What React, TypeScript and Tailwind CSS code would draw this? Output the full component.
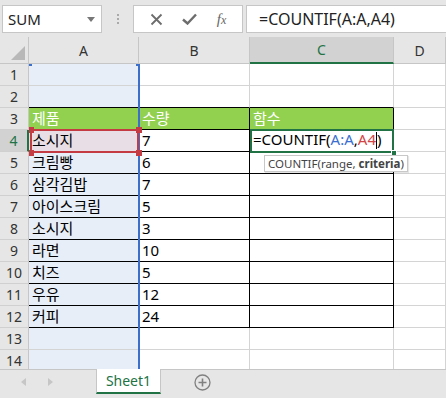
import React from "react";

const cols = [
  { key: "A", w: "w-[110px]" },
  { key: "B", w: "w-[111px]" },
  { key: "C", w: "w-[144px]" },
  { key: "D", w: "flex-1" },
];

const data: Array<[string, string]> = [
  ["소시지", "7"],
  ["크림빵", "6"],
  ["삼각김밥", "7"],
  ["아이스크림", "5"],
  ["소시지", "3"],
  ["라면", "10"],
  ["치즈", "5"],
  ["우유", "12"],
  ["커피", "24"],
];

const font = { fontFamily: '"Noto Sans", "Noto Sans CJK KR", sans-serif' };

function Cell({
  col,
  row,
}: {
  col: string;
  row: number;
}) {
  const inTable = row >= 3 && row <= 12 && col !== "D";
  const topOfTable = row === 2 && col !== "D";
  const isHead = row === 3 && col !== "D";
  const w = cols.find((c) => c.key === col)!.w;

  let bg = "bg-white";
  if (col === "A") bg = "bg-[#e8eef8]";
  if (col === "A" && row === 4) bg = "bg-[#e8dfe6]";
  if (isHead) bg = "bg-[#92d050]";

  const border =
    inTable
      ? "border-r border-b border-r-black border-b-black"
      : topOfTable
        ? "border-r border-b border-r-[#d4d4d4] border-b-black"
        : "border-r border-b border-[#d4d4d4]";

  let text: React.ReactNode = null;
  if (isHead) text = col === "A" ? "제품" : col === "B" ? "수량" : "함수";
  if (row >= 4 && row <= 12) {
    const d = data[row - 4];
    if (col === "A") text = d[0];
    if (col === "B") text = d[1];
  }
  if (col === "C" && row === 4) {
    text = (
      <span className="relative">
        =COUNTIF(<span className="text-[#3a6fd0]">A:A</span>,
        <span className="text-[#d24545]">A4</span>
        <span className="inline-block w-px h-[17px] bg-black align-middle -mt-[2px]" />)
      </span>
    );
  }

  return (
    <div
      className={`${w} shrink-0 h-full ${bg} ${border} flex items-center pl-[3px] text-[15px] leading-none whitespace-nowrap overflow-visible ${
        isHead ? "text-white" : "text-black"
      }`}
    >
      {text}
    </div>
  );
}

function XIcon() {
  return (
    <svg width="13" height="13" viewBox="0 0 13 13">
      <path d="M1.5 1.5 L11.5 11.5 M11.5 1.5 L1.5 11.5" stroke="#6d6d6d" strokeWidth="1.8" />
    </svg>
  );
}

function CheckIcon() {
  return (
    <svg width="15" height="12" viewBox="0 0 15 12">
      <path d="M1 6.5 L5.5 10.5 L14 1.5" stroke="#6d6d6d" strokeWidth="2.4" fill="none" />
    </svg>
  );
}

export default function App() {
  const rows = Array.from({ length: 14 }, (_, i) => i + 1);

  return (
    <div className="w-[446px] h-[398px] bg-[#e6e6e6] overflow-hidden select-none" style={font}>
      {/* formula bar */}
      <div className="h-[37px] flex items-start pt-[5px] pl-[2px]">
        <div className="w-[100px] h-[28px] bg-white border border-[#c6c6c6] flex items-center pl-[5px] pr-[6px] text-[15px] text-[#222]">
          <span className="flex-1">SUM</span>
          <svg width="8" height="5" viewBox="0 0 8 5">
            <path d="M0 0 H8 L4 5 Z" fill="#777" />
          </svg>
        </div>
        <div className="w-[31px] h-[28px] flex flex-col items-center justify-center gap-[2px]">
          <span className="w-[2px] h-[2px] bg-[#aaa]" />
          <span className="w-[2px] h-[2px] bg-[#aaa]" />
          <span className="w-[2px] h-[2px] bg-[#aaa]" />
        </div>
        <div className="w-[110px] h-[28px] bg-white border border-[#c6c6c6] flex items-center justify-around px-[6px]">
          <XIcon />
          <CheckIcon />
          <span
            className="text-[15px] italic text-[#666] leading-none"
            style={{ fontFamily: '"Liberation Serif", serif' }}
          >
            f<span className="text-[12px]">x</span>
          </span>
        </div>
        <div className="ml-[3px] flex-1 h-[28px] bg-white border border-[#c6c6c6] border-r-0 flex items-center pl-[12px] text-[16px] text-[#222]">
          =COUNTIF(A:A,A4)
        </div>
      </div>

      {/* grid */}
      <div className="relative h-[332px] overflow-hidden bg-white">
        {/* column header */}
        <div className="h-[27px] flex bg-[#e6e6e6] text-[14px] text-[#333]">
          <div className="w-[29px] shrink-0 h-full border-r border-b border-[#c6c6c6] flex items-end justify-end p-[3px]">
            <svg width="14" height="14" viewBox="0 0 14 14">
              <path d="M14 0 V14 H0 Z" fill="#b8b8b8" />
            </svg>
          </div>
          {cols.map((c) => (
            <div
              key={c.key}
              className={`${c.w} shrink-0 h-full flex items-center justify-center border-r border-[#c6c6c6] ${
                c.key === "C"
                  ? "bg-[#d2d2d2] border-b-2 border-b-[#217346] text-[#217346]"
                  : "border-b border-b-[#c6c6c6]"
              }`}
            >
              {c.key}
            </div>
          ))}
        </div>

        {rows.map((r) => (
          <div key={r} className="h-[22px] flex">
            <div
              className={`w-[29px] shrink-0 h-full flex items-center justify-center text-[14px] border-b border-[#d0d0d0] ${
                r === 4
                  ? "bg-[#d2d2d2] text-[#217346] border-r-2 border-r-[#217346]"
                  : "bg-[#e6e6e6] text-[#333] border-r border-r-[#c6c6c6]"
              }`}
            >
              {r}
            </div>
            {cols.map((c) => (
              <Cell key={c.key} col={c.key} row={r} />
            ))}
          </div>
        ))}

        {/* blue range A:A */}
        <div className="absolute left-[138px] top-[27px] w-[2px] h-[320px] bg-[#3c6fcb]" />
        <div className="absolute left-[29px] top-[27px] w-[3px] h-[2px] bg-[#3c6fcb]" />
        <div className="absolute left-[136px] top-[27px] w-[4px] h-[2px] bg-[#3c6fcb]" />

        {/* red range A4 */}
        <div className="absolute left-[30px] top-[92px] w-[109px] h-[24px] border-2 border-[#c43b44]" />
        <div className="absolute left-[29px] top-[90px] w-[5px] h-[6px] bg-[#c43b44]" />
        <div className="absolute left-[136px] top-[90px] w-[6px] h-[6px] bg-[#c43b44]" />
        <div className="absolute left-[29px] top-[113px] w-[5px] h-[6px] bg-[#c43b44]" />
        <div className="absolute left-[136px] top-[113px] w-[6px] h-[6px] bg-[#c43b44]" />

        {/* active cell C4 */}
        <div className="absolute left-[250px] top-[92px] w-[144px] h-[24px] border-2 border-[#217346]" />
        <div className="absolute left-[391px] top-[113px] w-[6px] h-[6px] bg-[#217346] border border-white" />

        {/* tooltip */}
        <div className="absolute left-[264px] top-[118px] h-[17px] px-[3px] bg-white border border-[#c8c8c8] shadow-[1px_1px_1px_rgba(0,0,0,0.1)] flex items-center text-[11.5px] text-[#444] whitespace-nowrap">
          COUNTIF(range, <b className="font-bold ml-[3px]">criteria</b>)
        </div>
      </div>

      {/* sheet tabs */}
      <div className="h-[29px] flex items-start bg-[#e6e6e6] border-t border-[#c6c6c6]">
        <div className="w-[96px] h-[24px] flex items-center pl-[21px] gap-[22px]">
          <svg width="5" height="8" viewBox="0 0 5 8">
            <path d="M5 0 V8 L0 4 Z" fill="#c6c6c6" />
          </svg>
          <svg width="5" height="8" viewBox="0 0 5 8">
            <path d="M0 0 V8 L5 4 Z" fill="#c6c6c6" />
          </svg>
        </div>
        <div className="-mt-px w-[65px] h-[25px] bg-white border-x border-[#c6c6c6] border-b-2 border-b-[#217346] flex items-center justify-center text-[14px] text-[#217346]">
          Sheet1
        </div>
        <div className="ml-[33px] h-[24px] flex items-center">
          <svg width="17" height="17" viewBox="0 0 17 17">
            <circle cx="8.5" cy="8.5" r="7.5" fill="none" stroke="#808080" strokeWidth="1.3" />
            <path d="M8.5 4.5 V12.5 M4.5 8.5 H12.5" stroke="#808080" strokeWidth="1.6" />
          </svg>
        </div>
      </div>
    </div>
  );
}
